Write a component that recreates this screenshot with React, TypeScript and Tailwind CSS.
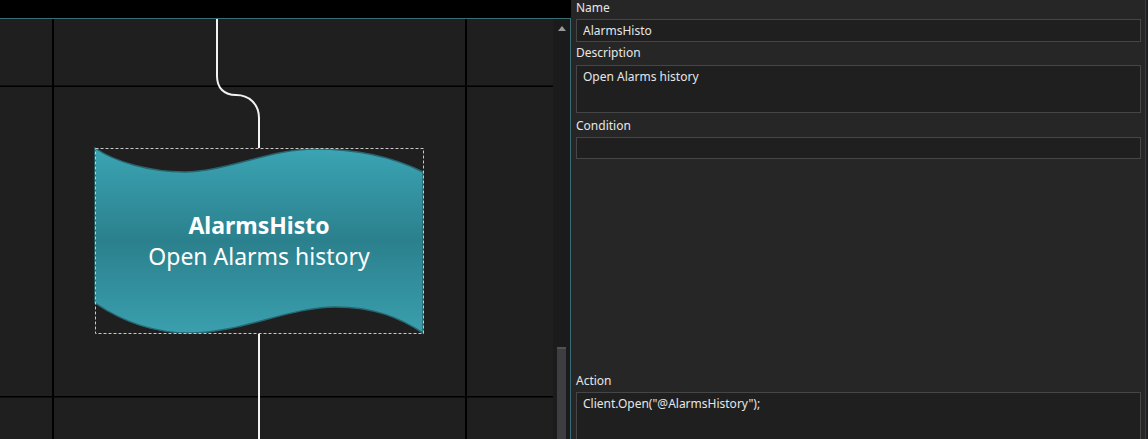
import { ChangeEvent, useState } from 'react'

// flow step editor: diagram canvas on the left, properties on the right
export default function App() {
  const [step, setStep] = useState({
    name: 'AlarmsHisto',
    description: 'Open Alarms history',
    condition: '',
    action: 'Client.Open("@AlarmsHistory");',
  })

  const handleChange = (e: ChangeEvent<HTMLInputElement | HTMLTextAreaElement>) => {
    setStep({ ...step, [e.target.name]: e.target.value })
  }

  return (
    <div className="flex h-[439px] w-[1148px] overflow-hidden bg-[#262626] font-['Noto_Sans',sans-serif]">
      {/* Canvas */}
      <div className="flex w-[571px] flex-col">
        <div className="h-[18px] bg-black" />
        <div className="flex flex-1 border-t border-r border-[#3a6c75] bg-[#1f1f1f]">
          <div className="relative w-[553px] overflow-hidden">
            <svg width="553" height="420" viewBox="0 19 553 420" className="block">
              <defs>
                <linearGradient id="stepFill" x1="0" y1="148" x2="0" y2="333" gradientUnits="userSpaceOnUse">
                  <stop offset="0" stopColor="#3ba4b3" />
                  <stop offset="0.5" stopColor="#2b808d" />
                  <stop offset="1" stopColor="#3a9fad" />
                </linearGradient>
              </defs>

              {/* grid */}
              <rect x="52" y="19" width="2" height="420" fill="#000" />
              <rect x="465" y="19" width="2" height="420" fill="#000" />
              <rect x="0" y="85.5" width="553" height="1.5" fill="#000" />
              <rect x="0" y="396" width="553" height="1.5" fill="#000" />

              {/* connectors */}
              <path
                d="M217 19 L217 76 C217 88 224 95 236 95 C249 95 259 104 259 118 L259 148"
                fill="none"
                stroke="#f2f2f2"
                strokeWidth="2"
              />
              <path d="M259 334 L259 439" fill="none" stroke="#f2f2f2" strokeWidth="2" />

              {/* step shape */}
              <path
                d="M95 148 C115 162 150 172 185 172 C225 172 270 149 315 149 C360 149 395 158 423 172 L423 333 C400 318 375 307 335 307 C290 307 240 333 190 333 C150 333 120 320 95 303 Z"
                fill="url(#stepFill)"
                stroke="#276772"
                strokeWidth="1.5"
              />
              <rect
                x="95.5"
                y="148.5"
                width="328"
                height="185"
                fill="none"
                stroke="#c8c8c8"
                strokeWidth="1"
                strokeDasharray="3 2"
              />
            </svg>

            <div className="absolute left-[95px] top-[129px] flex h-[185px] w-[328px] flex-col items-center justify-center text-white">
              <div className="text-[23px] font-bold leading-[30px]">{step.name}</div>
              <div className="text-[23px] leading-[32px]">{step.description}</div>
            </div>
          </div>

          {/* vertical scrollbar */}
          <div className="flex w-[17px] flex-col items-center bg-[#1b1b1b]">
            <div className="mt-[7px] h-0 w-0 border-x-[4px] border-b-[5px] border-x-transparent border-b-[#9a9a9a]" />
            <div className="flex-1" />
            <div className="h-[92px] w-[9px] border-t-2 border-[#505055] bg-[#3d3d42]" />
          </div>
        </div>
      </div>

      {/* Properties */}
      <div className="flex flex-1">
        <div className="flex flex-1 flex-col pl-[5px] pr-[4px] text-[12px] leading-[16px] text-[#e6e6e6]">
          <label className="h-[16px] shrink-0">Name</label>
          <input
            name="name"
            value={step.name}
            onChange={handleChange}
            className="mt-[3px] h-[23px] shrink-0 border border-[#464646] bg-[#1f1f1f] px-[6px] leading-[21px] text-[#e6e6e6] outline-none"
          />

          <label className="mt-[3px] h-[16px] shrink-0">Description</label>
          <textarea
            name="description"
            value={step.description}
            onChange={handleChange}
            className="mt-[4px] h-[48px] shrink-0 resize-none border border-[#464646] bg-[#1f1f1f] px-[6px] pt-[3px] leading-[16px] text-[#e6e6e6] outline-none"
          />

          <label className="mt-[5px] h-[16px] shrink-0">Condition</label>
          <input
            name="condition"
            value={step.condition}
            onChange={handleChange}
            className="mt-[3px] h-[22px] shrink-0 border border-[#464646] bg-[#1f1f1f] px-[6px] leading-[20px] text-[#e6e6e6] outline-none"
          />

          <label className="mt-[214px] h-[16px] shrink-0">Action</label>
          <textarea
            name="action"
            value={step.action}
            onChange={handleChange}
            className="mt-[3px] h-[60px] shrink-0 resize-none border border-[#464646] bg-[#1f1f1f] px-[6px] pt-[3px] leading-[16px] text-[#e6e6e6] outline-none"
          />
        </div>
        <div className="w-[3px] border-l border-[#3a3a3e] bg-[#1e1e21]" />
      </div>
    </div>
  )
}
